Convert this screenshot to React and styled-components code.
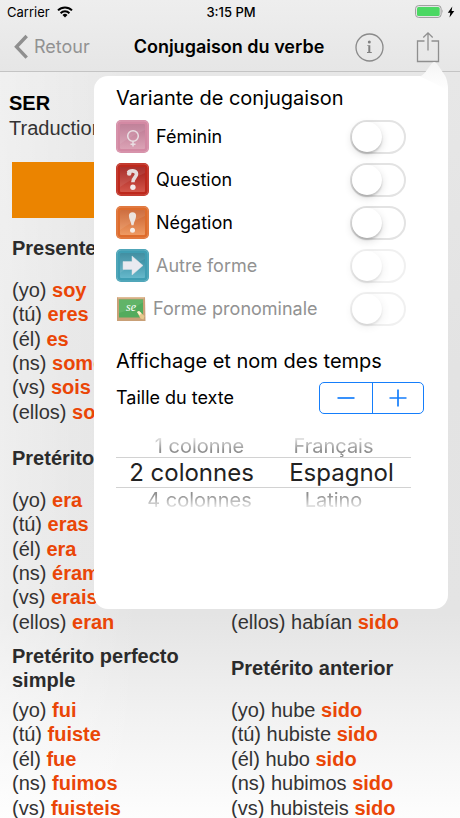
import React, { useState } from "react";
import styled, { createGlobalStyle, css } from "styled-components";

const UI_FONT = '"Inter", "Roboto", sans-serif';
const TEXT_FONT = '"Liberation Sans", Arial, sans-serif';

const GlobalStyle = createGlobalStyle`
  *, *::before, *::after { box-sizing: border-box; }
  body { margin: 0; font-family: ${UI_FONT}; color: #000; background: #fff; }
  h1, h2, h3, p, ul { margin: 0; padding: 0; font-weight: inherit; font-size: inherit; }
  ul { list-style: none; }
  button { margin: 0; padding: 0; border: 0; background: none; font: inherit; color: inherit; cursor: pointer; }
`;

const Screen = styled.div`
  position: relative;
  display: flex;
  flex-direction: column;
  height: 100vh;
  overflow: hidden;
  background:
    linear-gradient(90deg, rgba(255, 255, 255, 0.4), rgba(255, 255, 255, 0) 30%),
    linear-gradient(180deg, #e8e8e8 0%, #e3e3e3 45%, #e4e4e4 75%, #f2f2f2 88%, #fdfdfd 100%);
`;

const TopBar = styled.header`
  flex: none;
  border-bottom: 1px solid #c4c4c4;
  background: linear-gradient(180deg, #eeeeee, #e6e6e6);
`;

const StatusBar = styled.div`
  display: grid;
  grid-template-columns: 1fr auto 1fr;
  align-items: center;
  height: 23px;
  padding: 0 5px 0 7px;
  font-size: 13px;
  line-height: 16px;
`;

const StatusGroup = styled.div`
  display: flex;
  align-items: center;
  gap: ${(p) => p.$gap}px;
  justify-content: ${(p) => (p.$end ? "flex-end" : "flex-start")};
`;

const Clock = styled.time`
  font-weight: 500;
`;

const NavBar = styled.nav`
  display: grid;
  grid-template-columns: 1fr auto 1fr;
  align-items: center;
  height: 48px;
  padding: 0 20px 0 14px;
`;

const BackButton = styled.button`
  display: flex;
  align-items: center;
  gap: 6px;
  color: #929292;
  font-size: 18px;
  line-height: 24px;
`;

const NavTitle = styled.h1`
  margin-left: 4px;
  font-size: 18px;
  font-weight: 600;
  line-height: 24px;
  white-space: nowrap;
`;

const NavActions = styled.div`
  display: flex;
  align-items: center;
  justify-content: flex-end;
  gap: 32px;
`;

const IconButton = styled.button`
  display: flex;
`;

const Page = styled.main`
  padding: 19px 12px 0;
  font-family: ${TEXT_FONT};
  font-size: 20px;
  line-height: 24px;
  color: #333;
`;

const VerbHeader = styled.div`
  margin-left: -3px;
  line-height: 25px;
`;

const Verb = styled.h2`
  color: #000;
  font-weight: 700;
`;

const Banner = styled.div`
  height: 56px;
  margin-top: 21px;
  background: #eb8400;
`;

const TenseRow = styled.section`
  display: grid;
  grid-template-columns: 1fr 1fr;
  column-gap: 2px;
`;

const Tense = styled.article`
  display: flex;
  flex-direction: column;
  justify-content: flex-end;
`;

const TenseName = styled.h3`
  display: flex;
  align-items: center;
  height: ${(p) => (p.$compact ? 60 : 64)}px;
  padding-top: ${(p) => (p.$compact ? 0 : 4)}px;
  color: #2b2b2b;
  font-weight: 700;
`;

const Forms = styled.ul`
  display: grid;
  grid-auto-rows: 1fr;
  height: ${(p) => Math.round((p.$count * 122) / 5)}px;
  white-space: nowrap;
`;

const Form = styled.li`
  strong { color: #ea4607; font-weight: 700; }
`;

const Popover = styled.aside`
  position: absolute;
  top: 76px;
  left: 94px;
  right: 12px;
  padding: 9px 24px 98px 22px;
  border-radius: 14px;
  background: #fff;
`;

const PopoverArrow = styled.svg`
  position: absolute;
  top: -14px;
  right: 0;
`;

const SectionTitle = styled.h2`
  font-size: 20px;
  line-height: 26px;
  white-space: nowrap;
`;

const OptionList = styled.div`
  margin: 4px 18px 18px 0;
`;

const Option = styled.div`
  display: flex;
  align-items: center;
  gap: 7px;
  height: 43px;
  font-size: 18px;
  line-height: 24px;
  color: ${(p) => (p.$off ? "#929292" : "#000")};
  svg { flex: none; }
  label { flex: 1; white-space: nowrap; }
`;

const Toggle = styled.input.attrs({ type: "checkbox", role: "switch" })`
  appearance: none;
  flex: none;
  width: 56px;
  height: 34px;
  margin: 0;
  border: 2px solid #e3e3e3;
  border-radius: 17px;
  background: #fff;
  &::before {
    content: "";
    display: block;
    width: 30px;
    height: 30px;
    border-radius: 50%;
    background: #fff;
    box-shadow: 0 3px 8px rgba(0, 0, 0, 0.14), 0 2px 2px rgba(0, 0, 0, 0.16);
  }
  &:checked { background: #4cd964; border-color: #4cd964; }
  &:checked::before { margin-left: 22px; }
  &:disabled { opacity: 0.5; }
`;

const SizeRow = styled.div`
  display: flex;
  align-items: center;
  justify-content: space-between;
  margin-top: 8px;
  font-size: 18px;
  line-height: 24px;
`;

const Stepper = styled.div`
  display: grid;
  grid-template-columns: 1fr 1fr;
  width: 105px;
  height: 32px;
  border: 1px solid #157efb;
  border-radius: 5px;
`;

const StepButton = styled.button`
  display: flex;
  align-items: center;
  justify-content: center;
  & + & { border-left: 1px solid #157efb; }
`;

const Picker = styled.div`
  margin: 20px 13px 0 0;
`;

const PickerRow = styled.div`
  display: grid;
  justify-content: center;
  align-items: center;
  padding-left: 6px;
  ${(p) =>
    p.$selected
      ? css`
          grid-template-columns: 150px 150px;
          height: 31px;
          border: solid #d2d2d2;
          border-width: 1px 0;
          color: #222;
          font-size: 24px;
          line-height: 28px;
        `
      : css`
          grid-template-columns: 134px 134px;
          height: 23px;
          color: #909090;
          font-size: 20px;
          line-height: 22px;
          mask-image: linear-gradient(${p.$below ? "180deg" : "0deg"}, #000 30%, transparent 100%);
        `}
`;

const PickerItem = styled.button`
  white-space: nowrap;
`;

const TILES = {
  pink: ["#d389a3", "#ba7590", "#dba3b5"],
  red: ["#bd281c", "#a01c18", "#d3564a"],
  orange: ["#de6c2c", "#c9602e", "#ee9a63"],
  teal: ["#3f9eb3", "#2f8499", "#66b8cb"],
};

function Tile({ tone, children }) {
  const [edge, dark, light] = TILES[tone];
  return (
    <svg width="33" height="33" viewBox="0 0 33 33" aria-hidden="true">
      <defs>
        <linearGradient id={`tile-${tone}`} x1="0" y1="0" x2="0" y2="1">
          <stop offset="0" stopColor={dark} />
          <stop offset="1" stopColor={light} />
        </linearGradient>
      </defs>
      <rect width="33" height="33" rx="5" fill={edge} />
      <rect x="1" y="1" width="31" height="31" rx="4" fill="none" stroke="#fff" strokeOpacity="0.18" />
      <rect x="4" y="4" width="25" height="25" rx="1" fill={`url(#tile-${tone})`} />
      <path d="M4 4h25v6Q17 15 4 24z" fill="#fff" opacity="0.09" />
      {children}
    </svg>
  );
}

const FeminineIcon = () => (
  <Tile tone="pink">
    <g fill="none" stroke="#e9dfe3" strokeWidth="1.5">
      <circle cx="17" cy="16" r="5.3" />
      <path d="M17 21.5v5M14.5 24.2h5" />
    </g>
  </Tile>
);

const QuestionIcon = () => (
  <Tile tone="red">
    <path d="M12.3 9.8C13.5 7.2 20.5 6.8 20.5 11c0 3.6-3.8 3.4-3.6 8.2" fill="none" stroke="#e6dddd" strokeWidth="3.6" />
    <circle cx="13.2" cy="10.5" r="2.3" fill="#e6dddd" />
    <circle cx="16.9" cy="24.3" r="2.7" fill="#f3eaea" />
  </Tile>
);

const ExclamationIcon = () => (
  <Tile tone="orange">
    <path d="M12.9 9.8a3.6 3.6 0 0 1 7.2 0c0 3-2 5.7-2.6 9.5h-2c-.6-3.8-2.6-6.5-2.6-9.5z" fill="#ece4e0" />
    <circle cx="16.5" cy="24.3" r="2.5" fill="#f5eeea" />
  </Tile>
);

const ArrowIcon = () => (
  <Tile tone="teal">
    <path d="M7 12.5h9V7l11 9.5L16 26v-5.5H7z" fill="#e9eaf0" stroke="#d5dde3" strokeWidth="0.5" />
  </Tile>
);

const SlateText = styled.text`
  font: italic 400 12px "Liberation Serif", serif;
`;

const SlateIcon = () => (
  <svg width="30" height="26" viewBox="0 0 30 26" aria-hidden="true">
    <path d="M1 1h28l.5 24H1z" fill="#c9a077" />
    <path d="M1 1h28l-1 1.5H2z" fill="#e0bd98" />
    <path d="M3 3.5h24v18H3z" fill="#53ab5d" />
    <path d="M3 3.5h24v3Q15 14 3 17z" fill="#6abb70" opacity="0.6" />
    <SlateText x="10" y="15" fill="#fff">se</SlateText>
    <path d="M21 16l2-1 5.5 5-1 3.5-3-1z" fill="#e6c98e" />
    <path d="M21 16l2-1 2.5 2.3-2 2z" fill="#fff3d0" />
  </svg>
);

const BackChevron = () => (
  <svg width="14" height="26" viewBox="0 0 14 26" aria-hidden="true">
    <path d="M12.7 2 2.5 12.8l10.2 10.8" fill="none" stroke="#8f8f8f" strokeWidth="3.4" />
  </svg>
);

const InfoGlyph = () => (
  <svg width="29" height="29" viewBox="0 0 29 29" aria-hidden="true">
    <circle cx="14.5" cy="14.5" r="13.5" fill="none" stroke="#8a8a8a" strokeWidth="1.3" />
    <circle cx="14.3" cy="9" r="1.5" fill="#808080" />
    <path d="M12.3 12.2h3v7h-2v-6.200h-1z" fill="#808080" />
    <path d="M12 19.5h4.8" fill="none" stroke="#808080" strokeWidth="1" />
  </svg>
);

const ShareGlyph = () => (
  <svg width="24" height="32" viewBox="0 0 24 32" aria-hidden="true">
    <path d="M8.5 10H1.5v20.5h21V10h-7M12 19.5V2M7.3 6.5 12 1.8l4.7 4.7" fill="none" stroke="#8f8f8f" strokeWidth="1.3" />
  </svg>
);

const WifiGlyph = () => (
  <svg width="16" height="12" viewBox="0 0 16 12" aria-hidden="true">
    <g fill="none" stroke="#000" strokeWidth="2">
      <path d="M1 4.4a10 10 0 0 1 14 0" />
      <path d="M3.6 7.2a6.2 6.2 0 0 1 8.8 0" />
    </g>
    <path d="M8 11.6 5.5 9a3.5 3.5 0 0 1 5 0z" />
  </svg>
);

const BatteryGlyph = () => (
  <svg width="29" height="13" viewBox="0 0 29 13" aria-hidden="true">
    <rect x="0.6" y="0.6" width="25.5" height="11.8" rx="3" fill="none" stroke="#999" />
    <rect x="2" y="2" width="22.7" height="9" rx="1.5" fill="#4bd863" />
    <path d="M27.3 4.3q1.6 2.2 0 4.4z" fill="#999" />
  </svg>
);

const BoltGlyph = () => (
  <svg width="8" height="12" viewBox="0 0 8 12" aria-hidden="true">
    <path d="M5.3.5.8 6.8h2.5L2.5 11.5 7.3 5H4.6z" />
  </svg>
);

const OPTIONS = [
  { id: "feminin", label: "Féminin", Icon: FeminineIcon },
  { id: "question", label: "Question", Icon: QuestionIcon },
  { id: "negation", label: "Négation", Icon: ExclamationIcon },
  { id: "autre", label: "Autre forme", Icon: ArrowIcon, off: true },
  { id: "pronominale", label: "Forme pronominale", Icon: SlateIcon, off: true },
];

const TENSES = [
  [
    {
      name: "Presente",
      forms: [["(yo)", "soy"], ["(tú)", "eres"], ["(él)", "es"], ["(ns)", "somos"], ["(vs)", "sois"], ["(ellos)", "son"]],
    },
  ],
  [
    {
      name: "Pretérito imperfecto",
      forms: [["(yo)", "era"], ["(tú)", "eras"], ["(él)", "era"], ["(ns)", "éramos"], ["(vs)", "erais"], ["(ellos)", "eran"]],
    },
    { forms: [["(ellos) habían", "sido"]] },
  ],
  [
    {
      name: "Pretérito perfecto simple",
      forms: [["(yo)", "fui"], ["(tú)", "fuiste"], ["(él)", "fue"], ["(ns)", "fuimos"], ["(vs)", "fuisteis"]],
    },
    {
      name: "Pretérito anterior",
      forms: [["(yo) hube", "sido"], ["(tú) hubiste", "sido"], ["(él) hubo", "sido"], ["(ns) hubimos", "sido"], ["(vs) hubisteis", "sido"]],
    },
  ],
];

export default function App() {
  const [checked, setChecked] = useState({});
  const [, setSize] = useState(20);

  return (
    <Screen>
      <GlobalStyle />
      <TopBar>
        <StatusBar>
          <StatusGroup $gap={7}>
            <span>Carrier</span>
            <WifiGlyph />
          </StatusGroup>
          <Clock>3:15 PM</Clock>
          <StatusGroup $gap={3} $end>
            <BatteryGlyph />
            <BoltGlyph />
          </StatusGroup>
        </StatusBar>
        <NavBar>
          <BackButton>
            <BackChevron />
            Retour
          </BackButton>
          <NavTitle>Conjugaison du verbe</NavTitle>
          <NavActions>
            <IconButton aria-label="Informations"><InfoGlyph /></IconButton>
            <IconButton aria-label="Partager"><ShareGlyph /></IconButton>
          </NavActions>
        </NavBar>
      </TopBar>

      <Page>
        <VerbHeader>
          <Verb>SER</Verb>
          <p>Traduction</p>
        </VerbHeader>
        <Banner />
        {TENSES.map((row, r) => (
          <TenseRow key={r}>
            {row.map((tense, t) => (
              <Tense key={t}>
                {tense.name && <TenseName $compact={r === 0}>{tense.name}</TenseName>}
                <Forms $count={tense.forms.length}>
                  {tense.forms.map(([subject, verb]) => (
                    <Form key={subject}>{subject} <strong>{verb}</strong></Form>
                  ))}
                </Forms>
              </Tense>
            ))}
          </TenseRow>
        ))}
      </Page>

      <Popover aria-label="Options">
        <PopoverArrow width="30" height="30" viewBox="0 0 30 30" aria-hidden="true">
          <defs>
            <linearGradient id="arrow-fade" x1="0" y1="0" x2="0" y2="1">
              <stop offset="0" stopColor="#f4f4f4" />
              <stop offset="0.5" stopColor="#fafafa" />
              <stop offset="1" stopColor="#fff" />
            </linearGradient>
          </defs>
          <path d="M2 14.5C8 12.5 13 0 16 0S23 8 26 12q4 5 4 17l-14-8z" fill="url(#arrow-fade)" />
        </PopoverArrow>
        <SectionTitle>Variante de conjugaison</SectionTitle>
        <OptionList>
          {OPTIONS.map(({ id, label, Icon, off }) => (
            <Option key={id} $off={off}>
              <Icon />
              <label htmlFor={id}>{label}</label>
              <Toggle
                id={id}
                disabled={off}
                checked={!!checked[id]}
                onChange={(e) => setChecked({ ...checked, [id]: e.target.checked })}
              />
            </Option>
          ))}
        </OptionList>
        <SectionTitle>Affichage et nom des temps</SectionTitle>
        <SizeRow>
          <span id="text-size">Taille du texte</span>
          <Stepper role="group" aria-labelledby="text-size">
            <StepButton aria-label="Réduire" onClick={() => setSize((s) => s - 1)}>
              <svg width="18" height="18" viewBox="0 0 18 18" aria-hidden="true">
                <path d="M0.5 9h17" stroke="#157efb" strokeWidth="1.7" />
              </svg>
            </StepButton>
            <StepButton aria-label="Agrandir" onClick={() => setSize((s) => s + 1)}>
              <svg width="18" height="18" viewBox="0 0 18 18" aria-hidden="true">
                <path d="M0.5 9h17M9 0.5v17" stroke="#157efb" strokeWidth="1.7" />
              </svg>
            </StepButton>
          </Stepper>
        </SizeRow>
        <Picker>
          <PickerRow>
            <PickerItem>1 colonne</PickerItem>
            <PickerItem>Français</PickerItem>
          </PickerRow>
          <PickerRow $selected>
            <PickerItem aria-pressed="true">2 colonnes</PickerItem>
            <PickerItem aria-pressed="true">Espagnol</PickerItem>
          </PickerRow>
          <PickerRow $below>
            <PickerItem>4 colonnes</PickerItem>
            <PickerItem>Latino</PickerItem>
          </PickerRow>
        </Picker>
      </Popover>
    </Screen>
  );
}
